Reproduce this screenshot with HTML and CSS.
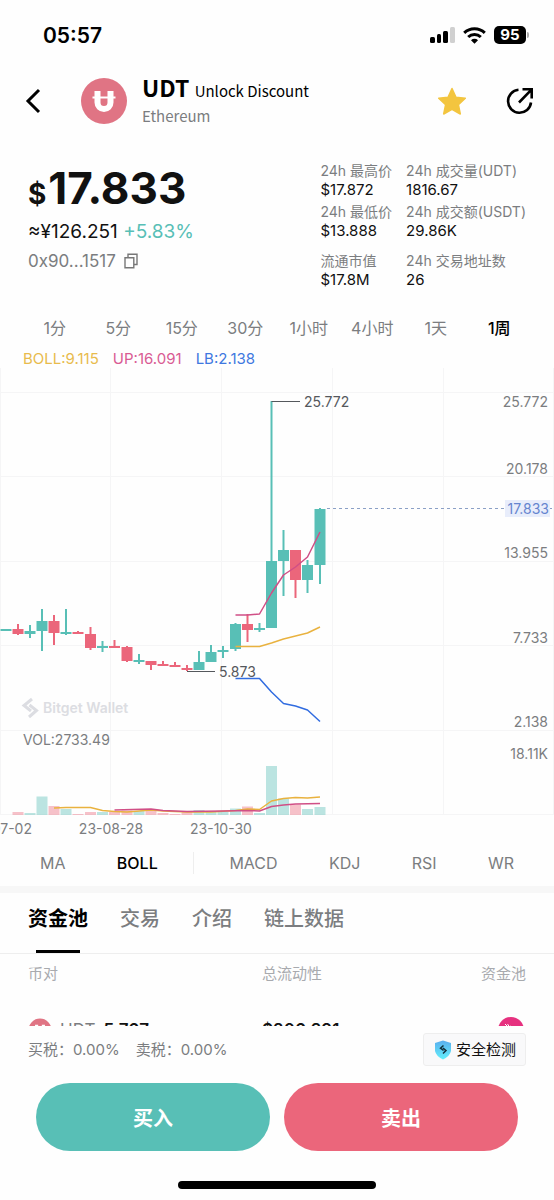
FILE: index.html
```html
<!doctype html>
<html lang="zh-CN">
<head>
<meta charset="utf-8">
<title>UDT - Bitget Wallet</title>
<meta name="viewport" content="width=device-width,initial-scale=1">
<link rel="stylesheet" href="styles.css">
</head>
<body>
<div class="app">

<div class="statusbar">
  <time class="clock">05:57</time>
  <div class="status-icons">
    <svg width="25" height="17" viewBox="0 0 25 17" aria-hidden="true">
      <rect x="0" y="10" width="5" height="6" rx="1.5"/>
      <rect x="7" y="7" width="4" height="9" rx="1.5"/>
      <rect x="13" y="4" width="5" height="12" rx="1.5"/>
      <rect x="20" y="0" width="5" height="16" rx="1.5" fill="#d0d0d0"/>
    </svg>
    <svg width="23" height="17" viewBox="0 0 23 17" aria-hidden="true">
      <g fill="none" stroke="#000" stroke-width="3">
        <path d="M1.2 5.9a15 15 0 0 1 20.6 0"/>
        <path d="M5.2 10a9 9 0 0 1 12.6 0"/>
      </g>
      <path d="M11.5 16.8L8 13.2a5 5 0 0 1 7 0z"/>
    </svg>
    <div class="battery">95</div>
  </div>
</div>

<header class="header">
  <button class="icon-btn" type="button" aria-label="返回">
    <svg width="16" height="26" viewBox="0 0 16 26" fill="none" stroke="#000" stroke-width="3"><path d="M14 2L3 13l11 11"/></svg>
  </button>
  <svg class="token-logo" width="46" height="46" viewBox="0 0 46 46" aria-hidden="true">
    <circle cx="23" cy="23" r="23" fill="#e07484"/>
    <path d="M16.500 13v11.500a6.500 6.500 0 0 0 13 0V13" fill="none" stroke="#fff" stroke-width="6"/>
    <path d="M11.500 19.500h23" stroke="#fff" stroke-width="2"/>
  </svg>
  <div class="token">
    <h1><b>UDT</b> Unlock Discount</h1>
    <p>Ethereum</p>
  </div>
  <button class="icon-btn" type="button" aria-label="收藏">
    <svg width="30" height="29" viewBox="0 0 30 29" fill="#f3c53f" stroke="#f3c53f" stroke-width="1.500" stroke-linejoin="round"><path d="M15 1.500l4 8.700 9.300 1.100-6.900 6.400 1.900 9.300-8.300-4.700L6.700 27l1.900-9.300-6.900-6.400 9.300-1.100z"/></svg>
  </button>
  <button class="icon-btn" type="button" aria-label="分享">
    <svg width="28" height="28" viewBox="0 0 28 28" fill="none" stroke="#000" stroke-width="2.600"><path d="M12.500 2.800A11.500 11.500 0 1 0 25 15.500M13 15.500L25 3.200M16.500 2.300h9.200v9.200"/></svg>
  </button>
</header>

<section class="summary">
  <div class="price-box">
    <div class="price"><small>$</small>17.833</div>
    <div class="fiat">≈¥126.251 <span class="rise">+5.83%</span></div>
    <div class="contract">0x90...1517
      <button class="icon-btn" type="button" aria-label="复制">
        <svg width="14" height="16" viewBox="0 0 14 16" fill="none" stroke="#777" stroke-width="1.400"><path d="M1 4.700h8.800v10H1zM4 4.700V1.200h9v10.300H9.800"/></svg>
      </button>
    </div>
  </div>
  <dl class="stats">
    <div><dt>24h 最高价</dt><dd>$17.872</dd></div>
    <div><dt>24h 成交量(UDT)</dt><dd>1816.67</dd></div>
    <div><dt>24h 最低价</dt><dd>$13.888</dd></div>
    <div><dt>24h 成交额(USDT)</dt><dd>29.86K</dd></div>
    <div class="spaced"><dt>流通市值</dt><dd>$17.8M</dd></div>
    <div class="spaced"><dt>24h 交易地址数</dt><dd>26</dd></div>
  </dl>
</section>

<nav class="periods">
  <button type="button">1分</button>
  <button type="button">5分</button>
  <button type="button">15分</button>
  <button type="button">30分</button>
  <button type="button">1小时</button>
  <button type="button">4小时</button>
  <button type="button">1天</button>
  <button type="button" class="active">1周</button>
</nav>

<div class="legend">
  <span class="c-mid">BOLL:9.115</span>
  <span class="c-up">UP:16.091</span>
  <span class="c-low">LB:2.138</span>
</div>

<svg class="chart" viewBox="0 368 554 472" role="img" aria-label="K线图">
  <path class="grid" d="M.5 368V815M110.500 368V815M221.500 368V815M332.500 368V815M443.500 368V815M553.500 368V815M0 392.500H554M0 476.500H554M0 561.500H554M0 645.500H554M0 730.500H554M0 814.500H554"/>

  <g class="watermark">
    <path d="M32 699L24 705.500 31 711"/>
    <path d="M29.500 705L36.500 710.500 29 717"/>
    <text x="43" y="713">Bitget Wallet</text>
  </g>

  <!-- candles: wicks, then bodies -->
  <path class="wick up" d="M30 625V638M42 609V651M66 609V635M102.500 641V652M139 654V664M199 651V670M211 645V662M223 646V658M235.500 623V651M259.500 623V632M271.500 401V628M283.500 530V596M307.500 560V593M320 508V584"/>
  <path class="wick down" d="M18 624V635M54 615V645M78 631V634M90.500 627V650M114.500 640V648M127 646V662M151 661V670M163 661V665M175 662V667M187 665V671M247.500 614V642M295.500 550V598"/>
  <path class="body up" d="M6 629V631M30 631V634M42 621V631M66 632V634M102.500 646V648M139 660V662M199 662V670M211 652V662M223 650V652M235.500 624V649M259.500 628V630M271.500 561V628M283.500 550V561M307.500 565V580M320 509V565"/>
  <path class="body down" d="M18 629V634M54 621V633M78 632V634M90.500 634V648M114.500 646V648M127 647V661M151 661V665M163 664V666M175 665V667M187 668V670M247.500 624V630M295.500 550V580"/>

  <!-- boll bands -->
  <path class="line l-up" d="M235.500 615L247.500 615 259.500 614 271.500 593 283.500 575 295.500 567 307.500 557 320 532"/>
  <path class="line l-mid" d="M235.500 646.500L259.500 646.500 271.500 643 283.500 639 295.500 636 307.500 633 320 627"/>
  <path class="line l-low" d="M235.500 678.500L259.500 678.500 271.500 692 283.500 703.500 295.500 706 307.500 710 320 721.500"/>

  <!-- volume -->
  <path class="vol up" d="M30 813V815M42 796.500V815M66 809V815M102.500 812V815M139 811V815M199 810V815M211 812V815M223 812V815M235.500 808.500V815M259.500 813V815M271.500 766V815M283.500 798.500V815M307.500 809V815M320 807V815"/>
  <path class="vol down" d="M18 812V815M54 806V815M78 814V815M90.500 812V815M114.500 812V815M127 810.500V815M151 811V815M163 813V815M175 814V815M187 812V815M247.500 806.500V815M295.500 804.500V815"/>
  <path class="line l-mid" d="M54 808L66 807.500 90.500 807.500 102.500 810.500 114.500 811.500 127 812 139 811 151 810 163 811 187 812 211 812 235.500 810.500 247.500 809 259.500 809.500 271.500 801 283.500 798.500 295.500 797.500 307.500 798 320 797"/>
  <path class="line l-up" d="M114.500 810L151 809 163 810.500 187 811.500 223 811 247.500 810.500 259.500 811 271.500 806.500 283.500 805 295.500 804 320 803.500"/>

  <path class="mark" d="M271.500 401.500H300M187 671.500H215"/>
  <text class="mark-label" x="304" y="407">25.772</text>
  <text class="mark-label" x="219" y="677">5.873</text>

  <path class="last" d="M327 508.500H554"/>
  <rect class="last-bg" x="505" y="500" width="45" height="17"/>

  <g class="axis end">
    <text x="548" y="407">25.772</text>
    <text x="548" y="474">20.178</text>
    <text x="549" y="514" class="last-label">17.833</text>
    <text x="548" y="558">13.955</text>
    <text x="548" y="643">7.733</text>
    <text x="548" y="727">2.138</text>
    <text x="548" y="759">18.11K</text>
  </g>
  <text class="axis" x="23" y="745">VOL:2733.49</text>
  <g class="axis middle">
    <text x="0" y="834">23-07-02</text>
    <text x="111" y="834">23-08-28</text>
    <text x="221" y="834">23-10-30</text>
  </g>
</svg>

<nav class="indicators">
  <button type="button">MA</button>
  <button type="button" class="active">BOLL</button>
  <span class="sep"></span>
  <button type="button">MACD</button>
  <button type="button">KDJ</button>
  <button type="button">RSI</button>
  <button type="button">WR</button>
</nav>

<nav class="tabs">
  <a href="#pool" class="active">资金池</a>
  <a href="#trades">交易</a>
  <a href="#about">介绍</a>
  <a href="#data">链上数据</a>
</nav>

<section class="pool" id="pool">
  <table>
    <thead>
      <tr><th>币对</th><th>总流动性</th><th>资金池</th></tr>
    </thead>
    <tbody>
      <tr>
        <td>
          <div class="pair">
            <svg width="24" height="24" viewBox="0 0 46 46" aria-hidden="true">
              <circle cx="23" cy="23" r="22" fill="#e07484"/>
              <path d="M16.500 13v11.500a6.500 6.500 0 0 0 13 0V13" fill="none" stroke="#fff" stroke-width="6"/>
              <path d="M11 19.500h24" stroke="#fff" stroke-width="3"/>
            </svg>
            <span>UDT</span><b>5.767</b>
          </div>
        </td>
        <td><b>$206,291</b></td>
        <td>
          <svg width="28" height="26" viewBox="0 0 28 26" role="img" aria-label="Uniswap">
            <circle cx="13" cy="13" r="13" fill="#e6317f"/>
            <path d="M7 7l3 3M9.500 7l2 3M12 9l2 1M10 11q6-1 8 6" stroke="#fff" stroke-width="1" fill="none"/>
          </svg>
        </td>
      </tr>
    </tbody>
  </table>
</section>

<footer class="footer">
  <div class="taxes">
    <span>买税：0.00%</span>
    <span>卖税：0.00%</span>
    <button class="safety" type="button">
      <svg width="18" height="20" viewBox="0 0 18 20" aria-hidden="true">
        <defs><linearGradient id="shield" x1="0" y1="0" x2="0" y2="1"><stop offset="0" stop-color="#5aaeee"/><stop offset="1" stop-color="#62effb"/></linearGradient></defs>
        <path d="M9 .5l8 2.500v8q-1 5-8 8.500Q2 16 1 11V3z" fill="url(#shield)"/>
        <path d="M9.500 5.500L6.500 8.200l3 2.300M9 8l3 2.600-3 2.900" fill="none" stroke="#12303c" stroke-width="1.500"/>
      </svg>
      安全检测
    </button>
  </div>
  <div class="actions">
    <button class="buy" type="button">买入</button>
    <button class="sell" type="button">卖出</button>
  </div>
  <div class="home-bar"></div>
</footer>

</div>
</body>
</html>
```
FILE: styles.css
```css
:root {
  --up: #58bfb6;
  --down: #eb667b;
  --grey: #7b7d80;
  --text: #111;
}
* { box-sizing:border-box; }
body {
  margin:0;
  background:#fefefe;
  color:var(--text);
  font-family: Inter, "Noto Sans CJK SC", sans-serif;
  font-size:14px;
}
button {
  border:0;
  padding:0;
  background:none;
  color:inherit;
  font:inherit;
}
svg { display:block; }
h1, p, dl, dd { margin:0; }
.app {
  display:flex;
  flex-direction:column;
  height:100vh;
  overflow:hidden;
}
.app > * { flex:none; }

/* status bar */
.statusbar {
  display:flex;
  justify-content:space-between;
  align-items:center;
  height:70px;
  padding:0 28px 0 43px;
}
.clock { font-size:21px; font-weight:600; color:#000; }
.status-icons { display:flex; align-items:center; gap:8px; }
.battery {
  position:relative;
  width:32px;
  height:18px;
  border-radius:5px;
  background:#000;
  color:#fff;
  font-size:15px;
  font-weight:700;
  line-height:18px;
  text-align:center;
}
.battery::after {
  content:"";
  position:absolute;
  right:-3px;
  top:6px;
  width:2px;
  height:6px;
  border-radius:0 2px 2px 0;
  background:#aaa;
}

/* header */
.header {
  display:flex;
  align-items:center;
  height:62px;
  padding:0 20px 0 25px;
  font-family:"Noto Sans CJK SC", sans-serif;
}
.token-logo { margin:0 15px 0 40px; }
.token { flex:1; }
.token h1 {
  font-size:15px;
  font-weight:400;
  line-height:26px;
  color:#000;
}
.token b { font-size:23px; margin-right:2px; }
.token p { font-size:15px; line-height:24px; color:var(--grey); }
.header .icon-btn + .icon-btn { margin-left:39px; }

/* price and stats */
.summary {
  display:flex;
  justify-content:space-between;
  padding:29px 28px 0 28px;
}
.price { font-size:44px; font-weight:700; line-height:54px; }
.price small { font-size:28px; line-height:1; margin-right:2px; }
.fiat { font-size:19px; line-height:34px; }
.rise { color:var(--up); }
.contract {
  display:flex;
  align-items:center;
  gap:8px;
  font-size:17px;
  line-height:24px;
  color:var(--grey);
}
.stats {
  display:grid;
  grid-template-columns:auto auto;
  column-gap:14px;
  row-gap:3px;
  align-content:start;
}
.stats dt { line-height:20px; color:var(--grey); }
.stats dd { font-size:15px; line-height:18px; }
.stats .spaced { padding-top:8px; }

/* period switch */
.periods {
  display:flex;
  padding:23px 23px 0;
  font-size:16px;
  line-height:32px;
  color:var(--grey);
}
.periods button { flex:1; }
.periods .active, .indicators .active { color:#000; font-weight:500; }

.legend {
  display:flex;
  gap:14px;
  padding:6px 23px 0;
  font-size:15px;
  line-height:18px;
}
.c-mid { color:#e8bb4c; }
.c-up { color:#d95b93; }
.c-low { color:#3f78e0; }

/* chart */
.chart { width:100%; font-size:14px; }
.chart path { fill:none; }
.chart .grid { stroke:#f5f5f6; }
.chart .wick { stroke-width:2; }
.chart .body { stroke-width:11; }
.chart .vol { stroke-width:11; opacity:.4; }
.chart .up { stroke:var(--up); }
.chart .down { stroke:var(--down); }
.chart .line { stroke-width:1.5; stroke-linejoin:round; }
.l-up { stroke:#d04f86; }
.l-mid { stroke:#e9b23f; }
.l-low { stroke:#316ce0; }
.chart .mark { stroke:#55585c; }
.mark-label { fill:#55585c; }
.axis { fill:var(--grey); }
.end { text-anchor:end; }
.middle { text-anchor:middle; }
.last { stroke:#8ba0c6; stroke-dasharray:3 3; }
.last-bg { fill:#e8edfb; }
.last-label { fill:#6585cf; }
.watermark path { stroke:#dcdde2; stroke-width:3; }
.watermark text { fill:#dcdde2; font-size:14px; font-weight:600; }

/* indicator switch */
.indicators {
  display:flex;
  justify-content:space-between;
  align-items:center;
  height:46px;
  padding:0 40px;
  font-size:16px;
  color:var(--grey);
}
.indicators .sep { width:1px; height:22px; margin:0 -16px; background:#eee; }

/* section tabs */
.tabs {
  display:flex;
  gap:32px;
  border-top:7px solid #f7f7f7;
  border-bottom:1px solid #eee;
  padding:0 28px;
  font-size:20px;
  font-weight:500;
}
.tabs a {
  position:relative;
  height:60px;
  line-height:52px;
  color:var(--grey);
  text-decoration:none;
}
.tabs .active { color:#000; font-weight:700; }
.tabs .active::after {
  content:"";
  position:absolute;
  left:8px;
  right:8px;
  bottom:0;
  height:3px;
  background:#000;
}

.app > .pool { flex:1; min-height:0; overflow:hidden; padding:0 28px; }
.pool table { width:100%; border-collapse:collapse; table-layout:fixed; }
.pool th {
  height:36px;
  padding:0;
  font-size:15px;
  font-weight:400;
  color:#a8aaae;
  text-align:left;
}
.pool th:first-child { width:47%; }
.pool th:last-child { text-align:right; }
.pool td { padding:27px 0 0; font-size:17px; }
.pool td:last-child svg { margin-left:auto; }
.pool b { font-weight:600; }
.pair { display:flex; align-items:center; gap:8px; }
.pair span { color:var(--grey); }

/* footer */
.footer { padding:7px 28px 11px; background:#fefefe; }
.taxes {
  display:flex;
  align-items:center;
  gap:16px;
  font-size:15px;
  line-height:20px;
  color:var(--grey);
}
.safety {
  display:flex;
  align-items:center;
  gap:4px;
  height:33px;
  margin-left:auto;
  padding:0 9px 0 10px;
  border:1px solid #eee;
  border-radius:3px;
  background:#f9f9fa;
  color:#111;
}
.actions { display:flex; gap:14px; padding:17px 8px 30px; }
.actions button {
  flex:1;
  height:68px;
  border-radius:34px;
  color:#fff;
  font-size:20px;
  font-weight:600;
}
.buy { background:var(--up); }
.sell { background:var(--down); }
.home-bar {
  width:198px;
  height:8px;
  margin:0 auto;
  border-radius:4px;
  background:#000;
}
```
